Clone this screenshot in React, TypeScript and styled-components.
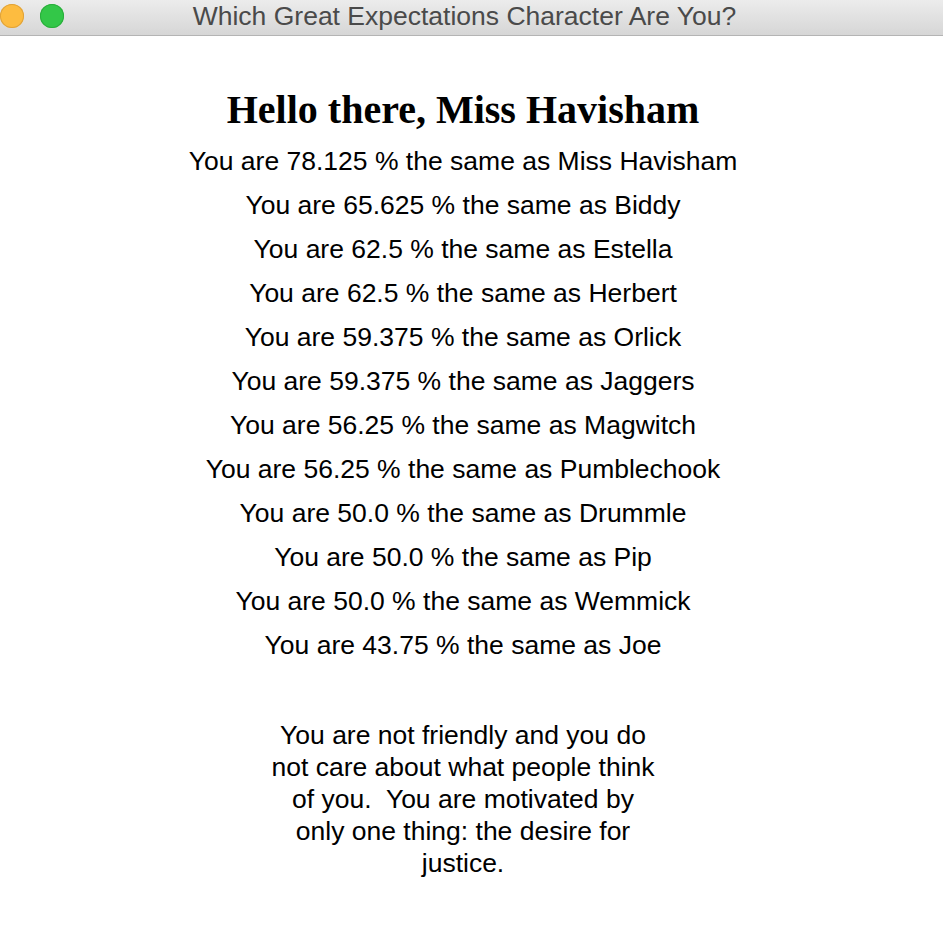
import styled, { createGlobalStyle } from 'styled-components';

const results = [
  { score: '78.125', name: 'Miss Havisham' },
  { score: '65.625', name: 'Biddy' },
  { score: '62.5', name: 'Estella' },
  { score: '62.5', name: 'Herbert' },
  { score: '59.375', name: 'Orlick' },
  { score: '59.375', name: 'Jaggers' },
  { score: '56.25', name: 'Magwitch' },
  { score: '56.25', name: 'Pumblechook' },
  { score: '50.0', name: 'Drummle' },
  { score: '50.0', name: 'Pip' },
  { score: '50.0', name: 'Wemmick' },
  { score: '43.75', name: 'Joe' },
];

const GlobalStyle = createGlobalStyle`
  html, body {
    margin: 0;
    padding: 0;
    background: #ffffff;
  }
`;

const App = () => (
  <Window>
    <GlobalStyle />
    <TitleBar>
      <Lights>
        <Light color="#fdbc40" border="#e0a33a" />
        <Light color="#33c748" border="#2aad3b" />
      </Lights>
      <WindowTitle>Which Great Expectations Character Are You?</WindowTitle>
    </TitleBar>
    <Content>
      <Greeting>Hello there, Miss Havisham</Greeting>
      <ResultList>
        {results.map((r) => (
          <ResultItem key={r.name}>
            You are {r.score} % the same as {r.name}
          </ResultItem>
        ))}
      </ResultList>
      <Description>
        You are not friendly and you do not care about what people think of you.&nbsp; You are motivated by only one thing: the desire for justice.
      </Description>
    </Content>
  </Window>
);

const Window = styled.div`
  width: 943px;
  min-height: 943px;
  background: #ffffff;
  overflow: hidden;
`;

const TitleBar = styled.div`
  position: relative;
  height: 36px;
  display: flex;
  align-items: center;
  justify-content: center;
  background: linear-gradient(#ececec, #d6d6d6);
  border-bottom: 1px solid #b4b4b4;
  box-sizing: border-box;
`;

const Lights = styled.div`
  position: absolute;
  left: 0;
  top: 0;
  height: 100%;
  display: flex;
  align-items: center;
  gap: 16px;
  margin-top: -2px;
`;

const Light = styled.span<{ color: string; border: string }>`
  width: 24px;
  height: 24px;
  border-radius: 50%;
  background: ${(p) => p.color};
  box-shadow: inset 0 0 0 1px ${(p) => p.border};
`;

const WindowTitle = styled.div`
  font-family: 'Liberation Sans', Arial, sans-serif;
  font-size: 26.5px;
  color: #4a4a4a;
  margin: -3px 0 0 -14px;
`;

const Content = styled.main`
  display: flex;
  flex-direction: column;
  align-items: center;
  padding: 52px 17px 40px 0;
  font-family: 'Liberation Sans', Arial, sans-serif;
  color: #000000;
`;

const Greeting = styled.h1`
  font-family: 'Liberation Serif', 'Times New Roman', serif;
  font-weight: bold;
  font-size: 40px;
  line-height: 44px;
  margin: 0 0 7px;
`;

const ResultList = styled.div`
  display: flex;
  flex-direction: column;
  align-items: center;
`;

const ResultItem = styled.div`
  font-size: 26.5px;
  line-height: 44px;
`;

const Description = styled.p`
  width: 390px;
  margin: 52px 0 0;
  text-align: center;
  font-size: 26.5px;
  line-height: 32px;
`;

export default App;
